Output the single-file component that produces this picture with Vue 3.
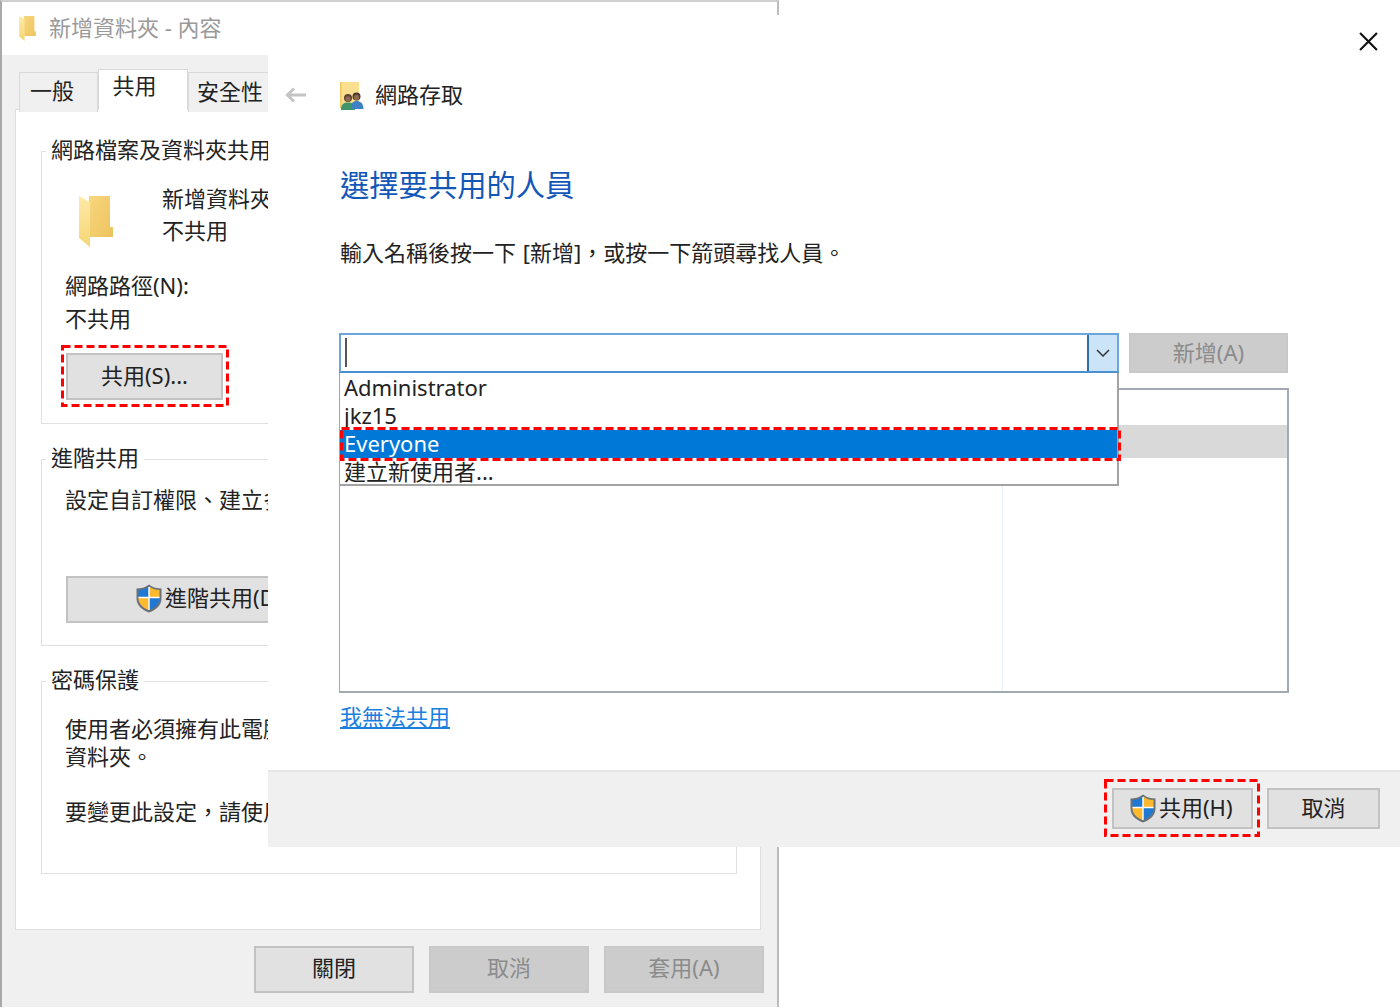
<script setup>
const users = ['Administrator', 'jkz15', 'Everyone', '建立新使用者...']
</script>

<template>
  <div class="desk" lang="zh-TW">
    <section class="props">
      <header class="props-title">
        <svg class="title-folder" viewBox="0 0 34 51">
          <path d="M10 0H31V31H34V41H10Z" fill="url(#folderBack)" />
          <path d="M0 0L11 6V51L0 42Z" fill="url(#folderFront)" />
        </svg>
        <span class="title-text">新增資料夾 - 內容</span>
      </header>
      <div class="props-body">
        <nav class="tabs">
          <div class="tab tab-first">一般</div>
          <div class="tab tab-active">共用</div>
          <div class="tab tab-last">安全性</div>
        </nav>
        <div class="panel">
          <div class="group g1">
            <div class="legend">網路檔案及資料夾共用</div>
            <div class="folder-row">
              <svg class="big-folder" viewBox="0 0 34 51">
                <defs>
                  <linearGradient id="folderBack" x1="0" y1="0" x2="1" y2="1">
                    <stop offset="0" stop-color="#f7d67c" />
                    <stop offset="1" stop-color="#eec35f" />
                  </linearGradient>
                  <linearGradient id="folderFront" x1="0" y1="0" x2="0" y2="1">
                    <stop offset="0" stop-color="#fdeaa8" />
                    <stop offset="1" stop-color="#f7d574" />
                  </linearGradient>
                </defs>
                <path d="M10 0H31V31H34V41H10Z" fill="url(#folderBack)" />
                <path d="M0 0L11 6V51L0 42Z" fill="url(#folderFront)" />
              </svg>
              <div class="folder-text">
                <div>新增資料夾</div>
                <div>不共用</div>
              </div>
            </div>
            <div class="path-line">網路路徑(N):</div>
            <div class="path-line">不共用</div>
            <div class="dash-wrap share-wrap">
              <button class="btn share-btn">共用(S)...</button>
              <svg class="dash"><rect class="dash-rect" x="1.5" y="1.5" /></svg>
            </div>
          </div>
          <div class="group g2">
            <div class="legend">進階共用</div>
            <div class="line">設定自訂權限、建立多個共用，以及設定其他進階共用選項。</div>
            <button class="btn adv-btn">
              <svg class="shield" viewBox="1 0.5 26 29">
                <path d="M14 1C10 4 6 5 1.500 5V15C1.500 22 7 26.500 14 29C21 26.500 26.500 22 26.500 15V5C22 5 18 4 14 1Z" fill="#6b7178" />
                <path d="M14 3C10.500 5.500 7 6.500 3.500 6.500V14H14Z" fill="#1f78d1" />
                <path d="M14 3C17.500 5.500 21 6.500 24.500 6.500V14H14Z" fill="#fdb92e" />
                <path d="M3.500 14H14V26.500C8 24.500 3.500 20.500 3.500 15Z" fill="#fdb92e" />
                <path d="M24.500 14H14V26.500C20 24.500 24.500 20.500 24.500 15Z" fill="#1f78d1" />
                <path d="M13.300 3.500H14.700V26.500H13.300ZM3.500 13.300H24.500V14.700H3.500Z" fill="#fff" />
              </svg>
              <span>進階共用(D)...</span>
            </button>
          </div>
          <div class="group g3">
            <div class="legend">密碼保護</div>
            <div class="pw-first">使用者必須擁有此電腦的使用者帳戶和密碼，才能存取共用<br />資料夾。</div>
            <div class="pw-second">要變更此設定，請使用[網路和共用中心]。</div>
          </div>
        </div>
        <div class="props-actions">
          <button class="btn act">關閉</button>
          <button class="btn act off">取消</button>
          <button class="btn act off">套用(A)</button>
        </div>
      </div>
    </section>

    <section class="wizard">
      <svg class="close" viewBox="0 0 18 18">
        <path d="M1 1L17 17M17 1L1 17" stroke="#111" stroke-width="2" fill="none" />
      </svg>
      <header class="wiz-head">
        <svg class="back" viewBox="0 0 22 16">
          <path d="M21 8H3M9 1.500L2.500 8L9 14.500" stroke="#c4c4c4" stroke-width="3" fill="none" />
        </svg>
        <svg class="net-icon" viewBox="0 0 24 29">
          <rect x="0" y="0" width="19" height="26" fill="#fbdf8e" />
          <rect x="0" y="0" width="1.500" height="26" fill="#eec75f" />
          <circle cx="8" cy="16" r="4" fill="#5d4334" />
          <ellipse cx="8" cy="17" rx="2.600" ry="2.800" fill="#8f6a4e" />
          <path d="M1 28C1 22 4 20.500 8 20.500C12 20.500 15 22 15 28Z" fill="#3f9468" />
          <circle cx="16.500" cy="14.500" r="4" fill="#4a3a30" />
          <ellipse cx="16.500" cy="15.500" rx="2.600" ry="2.800" fill="#8f6a4e" />
          <path d="M11 27C11 21 13 19 16.500 19C20 19 23.500 21 23.500 27Z" fill="#3c82c4" />
        </svg>
        <span class="wiz-name">網路存取</span>
      </header>
      <div class="wiz-main">
        <h1 class="heading">選擇要共用的人員</h1>
        <p class="desc">輸入名稱後按一下 [新增]，或按一下箭頭尋找人員。</p>
        <div class="picker">
          <div class="combo">
            <div class="combo-field"><i class="caret"></i></div>
            <div class="combo-arrow">
              <svg viewBox="0 0 14 8"><path d="M1 1L7 7L13 1" stroke="#333" stroke-width="1.500" fill="none" /></svg>
            </div>
          </div>
          <button class="btn add off">新增(A)</button>
          <ul class="drop">
            <li v-for="u in users" :key="u" :class="{ sel: u === 'Everyone' }">
              {{ u }}
              <svg v-if="u === 'Everyone'" class="dash row-dash"><rect class="dash-rect" x="1.5" y="1.5" /></svg>
            </li>
          </ul>
        </div>
        <div class="people">
          <div class="people-row"></div>
          <div class="people-col"></div>
        </div>
        <a class="link">我無法共用</a>
      </div>
      <footer class="wiz-foot">
        <div class="dash-wrap ok-wrap">
          <button class="btn ok-btn">
            <svg class="shield" viewBox="1 0.5 26 29">
              <path d="M14 1C10 4 6 5 1.500 5V15C1.500 22 7 26.500 14 29C21 26.500 26.500 22 26.500 15V5C22 5 18 4 14 1Z" fill="#6b7178" />
              <path d="M14 3C10.500 5.500 7 6.500 3.500 6.500V14H14Z" fill="#1f78d1" />
              <path d="M14 3C17.500 5.500 21 6.500 24.500 6.500V14H14Z" fill="#fdb92e" />
              <path d="M3.500 14H14V26.500C8 24.500 3.500 20.500 3.500 15Z" fill="#fdb92e" />
              <path d="M24.500 14H14V26.500C20 24.500 24.500 20.500 24.500 15Z" fill="#1f78d1" />
              <path d="M13.300 3.500H14.700V26.500H13.300ZM3.500 13.300H24.500V14.700H3.500Z" fill="#fff" />
            </svg>
            <span>共用(H)</span>
          </button>
          <svg class="dash"><rect class="dash-rect" x="1.5" y="1.5" /></svg>
        </div>
        <button class="btn cancel-btn">取消</button>
      </footer>
    </section>
  </div>
</template>

<style>
html, body { margin: 0; background: #fff; }
</style>

<style scoped>
.desk {
  position: relative;
  width: 1400px;
  height: 1008px;
  overflow: hidden;
  background: #fff;
  font-family: "Noto Sans", "Noto Sans CJK TC", sans-serif;
  font-size: 22px;
  color: #222;
}
.props {
  position: absolute;
  left: 0;
  top: 0;
  width: 779px;
  height: 1007px;
  box-sizing: border-box;
  display: flex;
  flex-direction: column;
  border-left: 2px solid #a9a9a9;
  border-top: 2px solid #cfcfcf;
  border-right: 2px solid #bdbdbd;
  white-space: nowrap;
}
.props-title {
  height: 53px;
  flex: none;
  display: flex;
  align-items: center;
  padding-left: 17px;
  color: #9a9a9a;
  background: #fff;
}
.title-folder { width: 17px; height: 25px; margin-right: 13px; }
.title-text { margin-bottom: 6px; }
.props-body {
  flex: 1;
  background: #f0f0f0;
  min-height: 0;
}
.tabs {
  display: flex;
  align-items: flex-start;
  height: 54px;
  box-sizing: border-box;
  padding: 14px 0 0 17px;
}
.tab {
  box-sizing: border-box;
  height: 40px;
  margin-top: 3px;
  padding-top: 2px;
  line-height: 32px;
  text-align: center;
  border: 1px solid #d9d9d9;
  border-bottom: 0;
  background: #f0f0f0;
}
.tab-first { width: 79px; padding-top: 1px; padding-right: 13px; }
.tab-active {
  position: relative;
  z-index: 1;
  width: 90px;
  height: 41px;
  margin-top: 0;
  padding-top: 0;
  padding-right: 17px;
  line-height: 30px;
  background: #fff;
}
.tab-last { width: 90px; padding-right: 6px; }
.panel {
  width: 746px;
  height: 821px;
  margin-left: 13px;
  box-sizing: border-box;
  padding: 41px 23px 0 25px;
  background: #fff;
  border: 1px solid #dedede;
}
.group {
  position: relative;
  box-sizing: border-box;
  border: 1px solid #e0e0e0;
  padding-left: 23px;
  margin-bottom: 35px;
}
.legend {
  position: absolute;
  left: 4px;
  top: -16px;
  padding: 0 5px;
  line-height: 26px;
  background: #fff;
}
.g1 { height: 273px; padding-top: 31px; }
.g2 { height: 187px; padding-top: 23px; }
.g3 { height: 193px; padding-top: 33px; }
.folder-row { display: flex; margin-left: 1px; }
.big-folder { width: 34px; height: 51px; margin: 13px 49px 0 13px; }
.folder-text { line-height: 32px; margin-top: -1px; }
.path-line { line-height: 33px; }
.folder-row + .path-line { margin-top: 22px; }
.btn {
  display: block;
  box-sizing: border-box;
  padding: 0 0 6px;
  font: inherit;
  color: #222;
  background: #e1e1e1;
  border: 2px solid #c2c2c2;
  white-space: nowrap;
}
.dash-wrap { position: relative; box-sizing: border-box; }
.dash {
  position: absolute;
  left: 0;
  top: 0;
  width: 100%;
  height: 100%;
  overflow: visible;
  pointer-events: none;
}
.dash-rect {
  width: calc(100% - 3px);
  height: calc(100% - 3px);
  fill: none;
  stroke: #f00;
  stroke-width: 3;
  stroke-dasharray: 8 4;
}
.share-wrap {
  width: 168px;
  height: 62px;
  margin: 10px 0 0 -4px;
  padding: 8px 0 0 5px;
}
.share-btn { width: 157px; height: 47px; }
.line { line-height: 32px; }
.adv-btn {
  display: flex;
  align-items: center;
  width: 300px;
  height: 47px;
  margin: 61px 0 0 1px;
  padding: 0 0 8px 68px;
}
.shield { width: 26px; height: 29px; flex: none; margin: 6px 3px 0 0; }
.pw-first { line-height: 27.500px; }
.pw-second { line-height: 30px; margin-top: 26px; }
.props-actions {
  display: flex;
  gap: 15px;
  padding: 16px 0 0 252px;
}
.act { width: 160px; height: 47px; padding-bottom: 8px; }
.off {
  background: #ccc;
  border-color: #c8c8c8;
  color: #8b8b8b;
}

.wizard {
  position: absolute;
  left: 268px;
  top: 15px;
  width: 1132px;
  height: 832px;
  display: flex;
  flex-direction: column;
  background: #fff;
}
.close {
  position: absolute;
  right: 22px;
  top: 17px;
  width: 19px;
  height: 19px;
}
.wiz-head {
  display: flex;
  align-items: center;
  height: 34px;
  margin-top: 63px;
  padding-left: 17px;
  flex: none;
}
.back { width: 22px; height: 16px; margin-right: 33px; }
.net-icon { width: 24px; height: 29px; margin-right: 11px; margin-top: 2px; }
.wiz-name { line-height: 34px; margin-bottom: 2px; }
.wiz-main { padding-left: 71px; flex: 1; }
.heading {
  margin: 53px 0 0 1px;
  font-size: 29.300px;
  font-weight: 400;
  line-height: 40px;
  color: #1257b8;
}
.desc { margin: 32px 0 0 1px; line-height: 30px; word-spacing: 1px; }
.picker {
  position: relative;
  display: flex;
  margin-top: 66px;
  height: 40px;
}
.combo {
  width: 780px;
  height: 40px;
  box-sizing: border-box;
  display: flex;
  border: 2px solid #6aa5dc;
  border-bottom-color: #4a90d0;
}
.combo-field { flex: 1; position: relative; }
.caret {
  position: absolute;
  left: 4px;
  top: 3px;
  width: 2px;
  height: 29px;
  background: #555;
}
.combo-arrow {
  width: 30px;
  display: flex;
  align-items: center;
  justify-content: center;
  box-sizing: border-box;
  background: #cce4f7;
  border-left: 2px solid #2f6ea8;
}
.combo-arrow svg { width: 14px; height: 8px; }
.add { width: 159px; height: 40px; margin-left: 10px; }
.drop {
  position: absolute;
  left: 0;
  top: 40px;
  width: 780px;
  height: 113px;
  box-sizing: border-box;
  margin: 0;
  padding: 1px 0 0;
  list-style: none;
  z-index: 2;
  background: #fff;
  border: 2px solid #a3a3a3;
  border-left-width: 1px;
  border-top: 0;
  font-size: 22px;
}
.drop li {
  position: relative;
  height: 28px;
  line-height: 26px;
  padding-left: 4px;
  white-space: nowrap;
}
.drop .sel { background: #0078d7; color: #fff; }
.row-dash {
  left: 0;
  top: -3px;
  width: 781px;
  height: 34px;
}
.people {
  position: relative;
  width: 950px;
  height: 305px;
  box-sizing: border-box;
  margin-top: 15px;
  border: 2px solid #a3a8b2;
  border-left-width: 1px;
}
.people-row {
  position: absolute;
  left: 778px;
  right: 0;
  top: 35px;
  height: 33px;
  background: #d9d9d9;
}
.people-col {
  position: absolute;
  left: 662px;
  top: 0;
  bottom: 0;
  width: 1px;
  background: #e5f1fb;
}
.link {
  display: block;
  margin: 8px 0 0 1px;
  line-height: 30px;
  color: #1a80e0;
  text-decoration: underline;
}
.wiz-foot {
  flex: none;
  height: 77px;
  box-sizing: border-box;
  display: flex;
  align-items: flex-start;
  padding: 7px 0 0 836px;
  background: #f0f0f0;
  border-top: 2px solid #e6e6e6;
}
.ok-wrap {
  width: 156px;
  height: 58px;
  padding: 9px 0 0 8px;
}
.ok-btn {
  display: flex;
  align-items: center;
  width: 141px;
  height: 41px;
  padding-left: 16px;
}
.cancel-btn { width: 113px; height: 41px; margin: 9px 0 0 7px; }
</style>
